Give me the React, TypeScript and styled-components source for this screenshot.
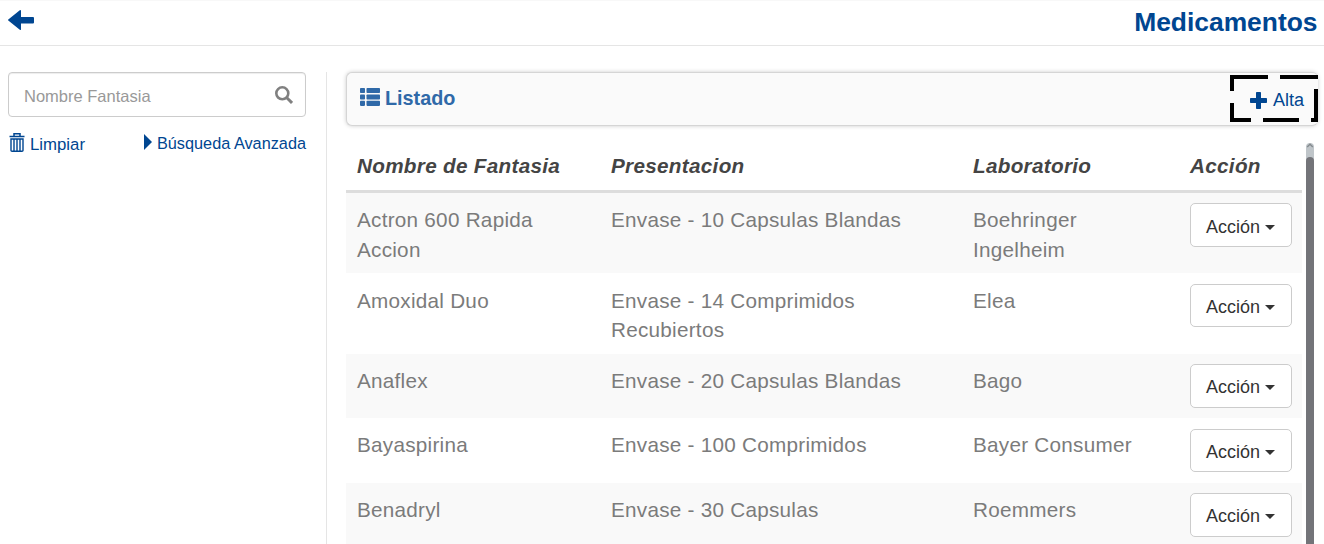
import React from "react";
import styled, { createGlobalStyle } from "styled-components";

const GlobalStyle = createGlobalStyle`
  *, *::before, *::after { box-sizing: border-box; }
  html, body { margin: 0; height: 544px; overflow: hidden; background: #fff; }
  body { font-family: "Liberation Sans", Helvetica, Arial, sans-serif; color: #7b7b7b; }
`;

const Page = styled.div`
  height: 544px;
  overflow: hidden;
  display: flex;
  flex-direction: column;
`;

const TopBar = styled.header`
  height: 46px;
  flex: none;
  display: flex;
  justify-content: space-between;
  align-items: flex-start;
  padding: 9px 6.5px 0 8px;
  border-top: 1px solid #f8f8f8;
  border-bottom: 1px solid #e5e5e5;
  color: #004691;
`;

const Title = styled.h1`
  margin: -3px 0 0;
  font-size: 26.4px;
  line-height: 30px;
  font-weight: bold;
`;

const Body = styled.div`
  flex: 1;
  min-height: 0;
  display: flex;
  padding-top: 26px;
`;

const Sidebar = styled.aside`
  width: 327px;
  flex: none;
  padding: 0 20px 0 8px;
  border-right: 1px solid #e5e5e5;
`;

const SearchBox = styled.div`
  height: 45px;
  display: flex;
  align-items: center;
  justify-content: space-between;
  padding: 0 12px 0 15px;
  border: 1px solid #ccc;
  border-radius: 4px;
  box-shadow: inset 0 1px 1px rgba(0, 0, 0, 0.075);
  font-size: 16.5px;
  color: #999;
  span { margin-top: 3.5px; }
`;

const SearchLinks = styled.div`
  display: flex;
  justify-content: space-between;
  align-items: flex-start;
  padding-top: 16px;
`;

const SearchLink = styled.a<{ $size: number; $textShift: number; $iconShift: number }>`
  display: flex;
  align-items: flex-start;
  gap: 5px;
  color: #004691;
  font-size: ${(p) => p.$size}px;
  line-height: 22px;
  white-space: nowrap;
  svg { margin-top: ${(p) => p.$iconShift}px; }
  span { margin-top: ${(p) => p.$textShift}px; }
`;

const Main = styled.main`
  flex: 1;
  min-width: 0;
  padding: 0 6px 0 19px;
`;

const Panel = styled.section`
  height: 54px;
  display: flex;
  justify-content: space-between;
  padding: 3px 0 0 13px;
  border: 1px solid #d5d5d5;
  border-right: 0;
  border-radius: 6px;
  background: #fafafa;
  box-shadow: 0 0 4px rgba(0, 0, 0, 0.2);
`;

const PanelTitle = styled.h2`
  margin: 0;
  padding-top: 11px;
  display: flex;
  gap: 5px;
  color: #2f69a8;
  font-size: 19.8px;
  line-height: 22px;
  svg { margin-top: 1px; }
`;

const dash = "#000";
const AddButton = styled.a`
  width: 88px;
  height: 47px;
  margin-top: -1px;
  display: flex;
  align-items: center;
  gap: 6px;
  padding: 4px 0 0 20px;
  color: #004691;
  font-size: 18px;
  background:
    linear-gradient(90deg, ${dash} 38px, transparent 38px 50px, ${dash} 50px) 0 0 / 88px 4px no-repeat,
    linear-gradient(90deg, ${dash} 21px, transparent 21px 33px, ${dash} 33px 69px, transparent 69px 81px, ${dash} 81px) 0 100% / 88px 4px no-repeat,
    linear-gradient(180deg, ${dash} 16px, transparent 16px 28px, ${dash} 28px) 0 0 / 4px 47px no-repeat,
    linear-gradient(180deg, ${dash} 2px, transparent 2px 14px, ${dash} 14px) 100% 0 / 4px 47px no-repeat;
  svg { margin-top: -1px; }
`;

const ListArea = styled.div`
  display: flex;
  align-items: flex-start;
  gap: 4px;
  padding-top: 17px;
`;

const Table = styled.table`
  width: 956px;
  flex: none;
  table-layout: fixed;
  border-collapse: separate;
  border-spacing: 0;
  font-size: 20.7px;
  letter-spacing: 0.26px;
  line-height: 29.57px;
`;

const HeadCell = styled.th`
  height: 50px;
  padding: 8px 11px 9px;
  border-bottom: 3px solid #ddd;
  text-align: left;
  font-style: italic;
  letter-spacing: 0.3px;
  color: #444;
`;

const Row = styled.tr`
  &:nth-child(odd) { background: #f9f9f9; }
`;

const Cell = styled.td`
  padding: 12.3px 11px 8.95px;
  vertical-align: top;
`;

const ActionCell = styled(Cell)`
  padding: 10.4px 0 10.4px 11px;
`;

const ActionButton = styled.button`
  width: 102px;
  height: 43.7px;
  display: flex;
  align-items: center;
  justify-content: flex-start;
  gap: 5px;
  padding: 4px 0 0 15px;
  border: 1px solid #ccc;
  border-radius: 5px;
  background: #fff;
  color: #333;
  font: 18px "Liberation Sans", Helvetica, sans-serif;
`;

const Caret = styled.span`
  border-top: 5px solid #333;
  border-left: 5px solid transparent;
  border-right: 5px solid transparent;
`;

const ScrollTrack = styled.div`
  width: 8px;
  height: 420px;
  border-radius: 4px 4px 0 0;
  background: #bfc5c9;
  svg { display: block; }
`;

const ScrollThumb = styled.div`
  height: 410px;
  margin-top: 4px;
  border-radius: 4px 4px 0 0;
  background: #737479;
`;

const rows = [
  ["Actron 600 Rapida Accion", "Envase - 10 Capsulas Blandas", "Boehringer Ingelheim"],
  ["Amoxidal Duo", "Envase - 14 Comprimidos Recubiertos", "Elea"],
  ["Anaflex", "Envase - 20 Capsulas Blandas", "Bago"],
  ["Bayaspirina", "Envase - 100 Comprimidos", "Bayer Consumer"],
  ["Benadryl", "Envase - 30 Capsulas", "Roemmers"],
];

const BackArrow = () => (
  <svg width="26" height="20" viewBox="0 0 26 20" fill="currentColor">
    <path d="M0.3 9.4 11.8 0.2Q13 -.4 13 1V7H25Q26 7 26 8V12.5Q26 13.5 25 13.5H13V19Q13 20.6 11.8 19.8L.3 10.6Q-.3 10 .3 9.4Z" />
  </svg>
);

const SearchIcon = () => (
  <svg width="18" height="18" viewBox="0 0 18 18" fill="none" stroke="#808080">
    <circle cx="7.3" cy="7.3" r="6" strokeWidth="2.6" />
    <path d="M11.8 11.8 17 16.9" strokeWidth="3" />
  </svg>
);

const TrashIcon = () => (
  <svg width="17" height="19" viewBox="-1 0 17 19" fill="none" stroke="currentColor">
    <path d="M0.5 3.6H15.5M5 3.5V.8H11V3.5" strokeWidth="1.5" />
    <path d="M2 6V17.6Q2 18.2 3 18.2H13Q14 18.2 14 17.6V6ZM5 6V18M8 6V18M11 6V18" strokeWidth="1.4" />
  </svg>
);

const ListIcon = () => (
  <svg width="20" height="18" viewBox="0 0 20 18" fill="currentColor">
    {[0, 6.4, 12.8].map((y) => (
      <g key={y}>
        <rect x="0" y={y} width="5" height="5.1" rx="0.8" />
        <rect x="6.5" y={y} width="13.5" height="5.1" rx="0.8" />
      </g>
    ))}
  </svg>
);

const PlusIcon = () => (
  <svg width="17" height="17" viewBox="0 0 17 17" fill="currentColor">
    <path d="M6.8 0H10.2Q11 0 11 .8V6H16.2Q17 6 17 6.8V10.2Q17 11 16.2 11H11V16.2Q11 17 10.2 17H6.8Q6 17 6 16.2V11H.8Q0 11 0 10.2V6.8Q0 6 .8 6H6V.8Q6 0 6.8 0Z" />
  </svg>
);

const TriangleIcon = () => (
  <svg width="8" height="16" viewBox="0 0 8 16" fill="currentColor">
    <path d="M0 0 8 8 0 16Z" />
  </svg>
);

export default function App() {
  return (
    <Page>
      <GlobalStyle />
      <TopBar>
        <BackArrow />
        <Title>Medicamentos</Title>
      </TopBar>
      <Body>
        <Sidebar>
          <SearchBox>
            <span>Nombre Fantasia</span>
            <SearchIcon />
          </SearchBox>
          <SearchLinks>
            <SearchLink $size={16.8} $textShift={1} $iconShift={0}>
              <TrashIcon />
              <span>Limpiar</span>
            </SearchLink>
            <SearchLink $size={16.3} $textShift={-1} $iconShift={1}>
              <TriangleIcon />
              <span>Búsqueda Avanzada</span>
            </SearchLink>
          </SearchLinks>
        </Sidebar>
        <Main>
          <Panel>
            <PanelTitle>
              <ListIcon />
              Listado
            </PanelTitle>
            <AddButton>
              <PlusIcon />
              Alta
            </AddButton>
          </Panel>
          <ListArea>
            <Table>
              <colgroup>
                <col width="254" />
                <col width="362" />
                <col width="217" />
                <col width="123" />
              </colgroup>
              <thead>
                <tr>
                  <HeadCell>Nombre de Fantasia</HeadCell>
                  <HeadCell>Presentacion</HeadCell>
                  <HeadCell>Laboratorio</HeadCell>
                  <HeadCell>Acción</HeadCell>
                </tr>
              </thead>
              <tbody>
                {rows.map(([name, pack, lab]) => (
                  <Row key={name}>
                    <Cell>{name}</Cell>
                    <Cell>{pack}</Cell>
                    <Cell>{lab}</Cell>
                    <ActionCell>
                      <ActionButton>
                        Acción
                        <Caret />
                      </ActionButton>
                    </ActionCell>
                  </Row>
                ))}
              </tbody>
            </Table>
            <ScrollTrack>
              <svg width="8" height="10" viewBox="0 0 8 10" fill="none" stroke="#858b8f" strokeWidth="1.4">
                <path d="M1.2 4 4 1.2 6.8 4" />
              </svg>
              <ScrollThumb />
            </ScrollTrack>
          </ListArea>
        </Main>
      </Body>
    </Page>
  );
}
